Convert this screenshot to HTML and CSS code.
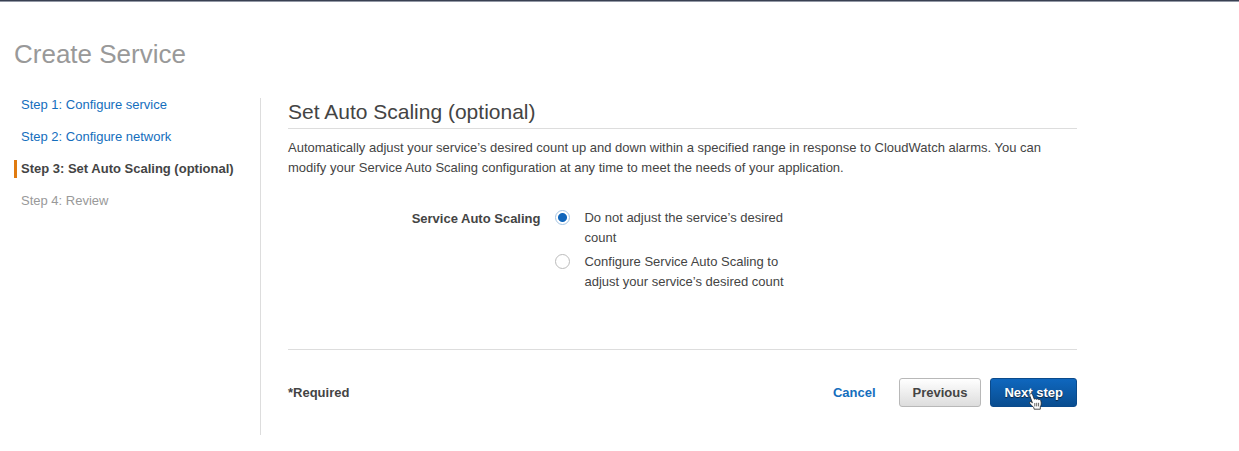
FILE: index.html
```html
<!DOCTYPE html>
<html lang="en">
<head>
<meta charset="utf-8">
<meta name="viewport" content="width=device-width, initial-scale=1">
<title>Create Service</title>
<link rel="stylesheet" href="styles.css">
</head>
<body>
<div class="topbar"></div>
<div class="page">
  <h1 class="page-title">Create Service</h1>
  <div class="wizard">
    <nav class="steps" aria-label="Wizard steps">
      <a class="step" href="#service">Step 1: Configure service</a>
      <a class="step" href="#network">Step 2: Configure network</a>
      <span class="step step-current" aria-current="step">Step 3: Set Auto Scaling (optional)</span>
      <span class="step step-pending">Step 4: Review</span>
    </nav>
    <main class="content">
      <h2 class="section-title">Set Auto Scaling (optional)</h2>
      <p class="intro">Automatically adjust your service’s desired count up and down within a specified range in response to CloudWatch alarms. You can modify your Service Auto Scaling configuration at any time to meet the needs of your application.</p>
      <form>
        <div class="field" role="radiogroup" aria-labelledby="scaling-label">
          <div class="field-label" id="scaling-label">Service Auto Scaling</div>
          <div class="options">
            <label class="option"><input class="radio" type="radio" name="scaling" checked><span>Do not adjust the service’s desired count</span></label>
            <label class="option"><input class="radio" type="radio" name="scaling"><span>Configure Service Auto Scaling to adjust your service’s desired count</span></label>
          </div>
        </div>
        <div class="footer">
          <span class="required">*Required</span>
          <a class="cancel" href="#cancel">Cancel</a>
          <button class="button" type="button">Previous</button>
          <button class="button button-primary" type="button">Next step
            <svg class="pointer" viewBox="0 0 13 17" aria-hidden="true"><path d="M1.4.8C2.3.3 3.2.8 3.6 1.7L5.3 6.2C5.9 5.5 7 5.6 7.5 6.3C8.2 5.7 9.2 5.8 9.7 6.7C10.7 6.2 11.7 6.8 11.9 8C12.5 10.5 12.3 12 11.3 13.7L11.3 16.2H5.1L4.9 14.6C3.3 13.4 2 11.8.7 10.3C.1 9.4 1 8.3 2.1 8.8L3.4 9.8L.8 2.8C.4 1.9.6 1.1 1.4.8Z" fill="#fff" stroke="#222" stroke-width=".8"/><path d="M5.8 10V13.4M7.7 9.8V13.4M9.6 9.8V13.4" stroke="#222" stroke-width=".7"/></svg>
          </button>
        </div>
      </form>
    </main>
  </div>
</div>
</body>
</html>
```
FILE: styles.css
```css
* {
  box-sizing: border-box;
}

body {
  margin: 0;
  background: #fff;
  color: #444;
  font-family: "Liberation Sans", Arial, sans-serif;
  font-size: 13px;
  line-height: 20px;
}

a {
  color: #146ebd;
  text-decoration: none;
}

.topbar {
  height: 2px;
  background: #394052;
  border-bottom: 1px solid #9298a5;
}

.page {
  max-width: 1091px;
  padding: 36px 14px 16px;
}

.page-title {
  margin: 0 0 28px;
  color: #999;
  font-size: 26px;
  font-weight: 400;
  line-height: 32px;
}

.wizard {
  display: grid;
  grid-template-columns: 247px minmax(0, 1fr);
  column-gap: 27px;
}

.steps {
  display: flex;
  flex-direction: column;
  align-items: flex-start;
  gap: 14px;
  border-right: 1px solid #ddd;
}

.step {
  padding-left: 4px;
  border-left: 3px solid transparent;
  line-height: 18px;
}

.step:first-child {
  padding-bottom: 2px;
  line-height: 14px;
}

.step-current {
  border-left-color: #e07b10;
  font-weight: 700;
}

.step-pending {
  color: #999;
}

.section-title {
  margin: 0 0 9px;
  padding-bottom: 3px;
  border-bottom: 1px solid #ddd;
  font-size: 21px;
  font-weight: 400;
  line-height: 27px;
}

.intro {
  margin: 0 0 30px;
}

.field {
  display: grid;
  grid-template-columns: 32% minmax(0, 1fr);
  column-gap: 15px;
  padding-bottom: 57px;
  border-bottom: 1px solid #ddd;
}

.field-label {
  padding-top: 1px;
  font-weight: 700;
  text-align: right;
}

.options {
  display: grid;
  gap: 4px;
  max-width: 236px;
}

.option {
  display: flex;
  align-items: flex-start;
  gap: 14px;
}

.radio {
  flex: none;
  width: 15px;
  height: 15px;
  margin: 2px 0 0;
  appearance: none;
  border: 1px solid #bbb;
  border-radius: 50%;
  background: #fff;
}

.radio:checked {
  border-color: #a5c5e3;
  background: radial-gradient(circle, #1166bb 4px, #fff 5px);
}

.footer {
  display: flex;
  align-items: center;
  padding: 28px 0;
  font-weight: 700;
}

.required {
  margin-right: auto;
}

.cancel {
  margin-right: 23px;
}

.button {
  position: relative;
  height: 29px;
  padding: 0 13px;
  border: 1px solid #b8b8b8;
  border-radius: 3px;
  background: linear-gradient(#fff, #ddd);
  color: #444;
  font: inherit;
}

.button-primary {
  margin-left: 9px;
  border-color: #0b4a8b;
  background: linear-gradient(#0f67be, #094d90);
  color: #fff;
  text-shadow: 0 1px 1px #123;
}

.pointer {
  position: absolute;
  top: 14px;
  left: 38px;
  width: 13px;
  height: 17px;
}
```
